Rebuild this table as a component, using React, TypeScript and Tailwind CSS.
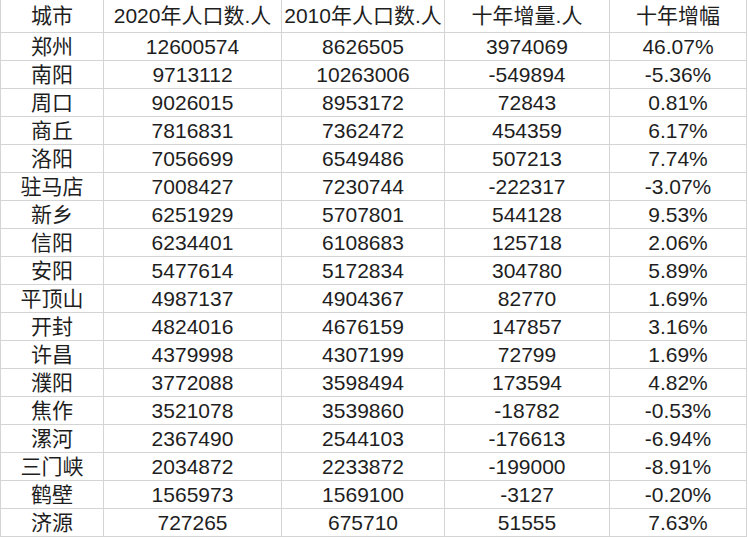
import React from "react";

const rows: [string, string, string, string, string][] = [
  ["郑州", "12600574", "8626505", "3974069", "46.07%"],
  ["南阳", "9713112", "10263006", "-549894", "-5.36%"],
  ["周口", "9026015", "8953172", "72843", "0.81%"],
  ["商丘", "7816831", "7362472", "454359", "6.17%"],
  ["洛阳", "7056699", "6549486", "507213", "7.74%"],
  ["驻马店", "7008427", "7230744", "-222317", "-3.07%"],
  ["新乡", "6251929", "5707801", "544128", "9.53%"],
  ["信阳", "6234401", "6108683", "125718", "2.06%"],
  ["安阳", "5477614", "5172834", "304780", "5.89%"],
  ["平顶山", "4987137", "4904367", "82770", "1.69%"],
  ["开封", "4824016", "4676159", "147857", "3.16%"],
  ["许昌", "4379998", "4307199", "72799", "1.69%"],
  ["濮阳", "3772088", "3598494", "173594", "4.82%"],
  ["焦作", "3521078", "3539860", "-18782", "-0.53%"],
  ["漯河", "2367490", "2544103", "-176613", "-6.94%"],
  ["三门峡", "2034872", "2233872", "-199000", "-8.91%"],
  ["鹤壁", "1565973", "1569100", "-3127", "-0.20%"],
  ["济源", "727265", "675710", "51555", "7.63%"],
];

const header = ["城市", "2020年人口数.人", "2010年人口数.人", "十年增量.人", "十年增幅"];

const cell =
  "flex items-center justify-center border-r border-b border-[#d4d4d4] whitespace-nowrap";

export default function App() {
  return (
    <div
      className="w-[748px] h-[537px] bg-white overflow-hidden text-[21px] text-[#1e1e1e]"
      style={{ fontFamily: '"Liberation Sans", "Noto Sans CJK SC", sans-serif' }}
    >
      <div className="grid grid-cols-[103px_178px_163px_165px_137px] w-[747px] border-l border-[#d4d4d4]">
        {header.map((h, i) => (
          <div key={i} className={`${cell} h-[33px]`}>
            {h}
          </div>
        ))}
        {rows.map((r, ri) =>
          r.map((v, ci) => (
            <div key={`${ri}-${ci}`} className={`${cell} h-[28px]`}>
              {v}
            </div>
          ))
        )}
      </div>
    </div>
  );
}
